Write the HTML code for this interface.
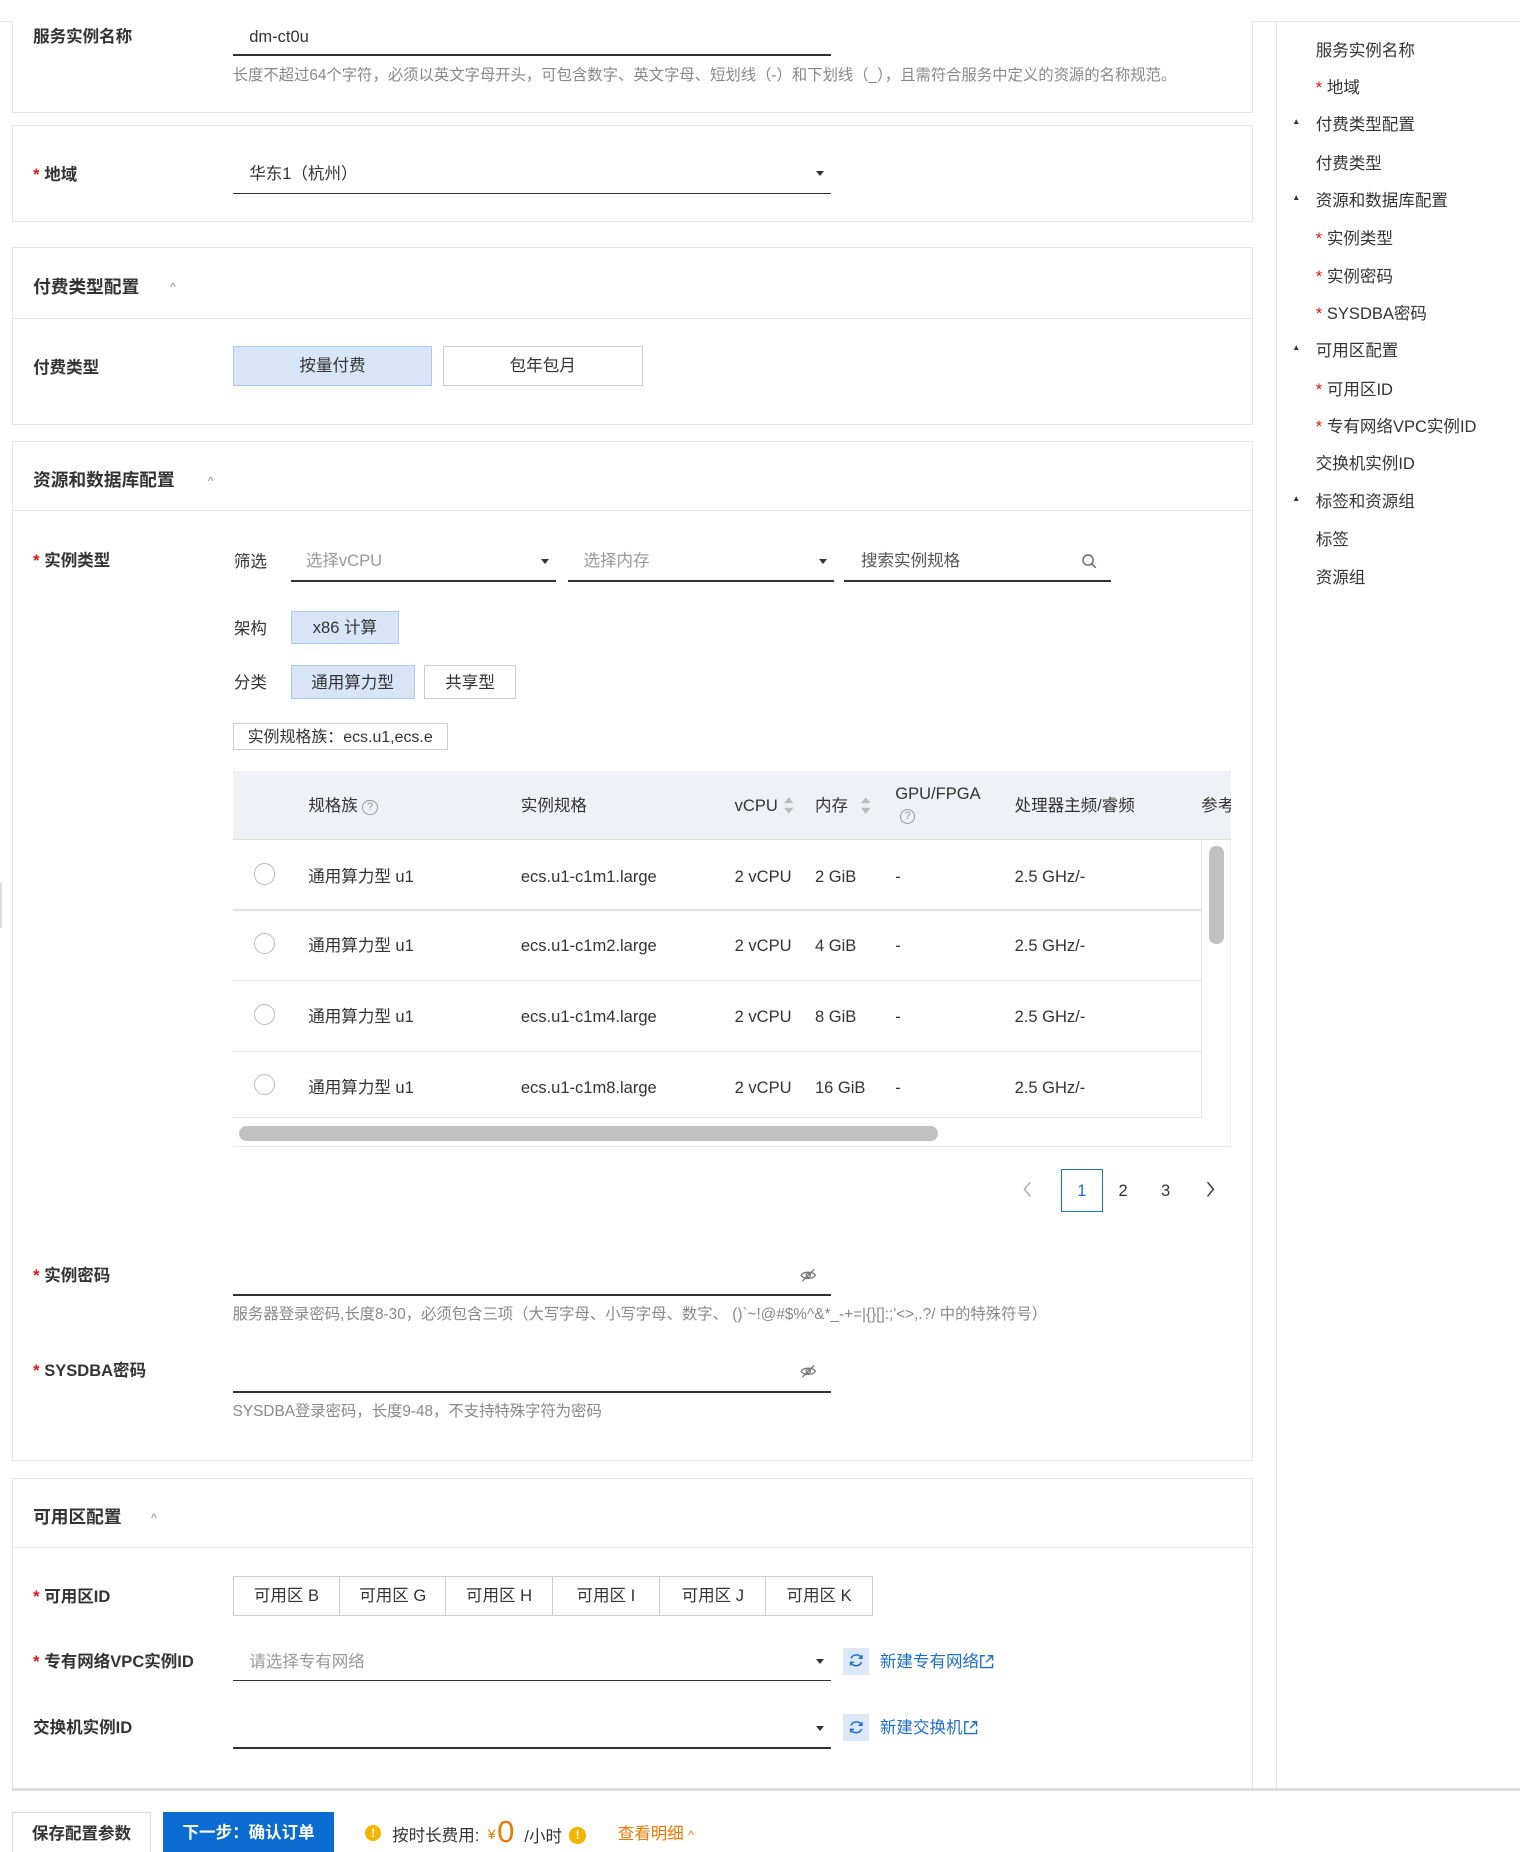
<!DOCTYPE html>
<html><head><meta charset="utf-8"><style>
*{box-sizing:border-box;margin:0;padding:0}
html,body{width:1520px;height:1852px;overflow:hidden;background:#fff}
#w{zoom:1.1811;position:relative;width:1287px;height:1568px;font-family:"Liberation Sans","Noto Sans CJK SC",sans-serif;color:#333;font-size:14px}
.a{position:absolute}
.t{position:absolute;line-height:20px;white-space:nowrap;padding-top:1px}
.card{position:absolute;left:10px;width:1051px;border:1px solid #e6e6e6;background:#fff}
.lb{font-weight:bold;color:#333;font-size:14px}
.st{color:#e3141a;margin-right:4px}
.ul{position:absolute;height:1.5px;background:#333}
.help{color:#888;font-size:13px}
.hd{font-weight:bold;font-size:15px}
.car{font-size:10px;color:#888}
.div{position:absolute;left:10px;width:1051px;height:1px;background:#e6e6e6}
.btn{position:absolute;border:1px solid #ccc;background:#fff;text-align:center;color:#333}
.sel{background:#d8e5f7;border-color:#a9c9ef}
.ph{color:#999}
.arr{position:absolute;width:0;height:0;border-left:4px solid transparent;border-right:4px solid transparent;border-top:5px solid #333}
.nav{position:absolute;left:1114px;font-size:14px;color:#333;line-height:20px;padding-top:1px}
.dot{position:absolute;left:1094px;font-size:7px;color:#333}
.row{position:absolute;left:197px;width:820px;height:1px;background:#e3e3e3}
.radio{position:absolute;left:215px;width:18px;height:18px;border:1px solid #bbb;border-radius:50%}
</style></head><body><div id="w">
<div class="a" style="left:0;top:18px;width:1287px;height:1px;background:#e6e6e6"></div>
<div class="a" style="left:1080px;top:18px;width:1px;height:1497px;background:#e6e6e6"></div>

<div class="card" style="top:18px;height:78px;border-top:none"></div>
<div class="t lb" style="left:28px;top:20px">服务实例名称</div>
<div class="t" style="left:211px;top:20px">dm-ct0u</div>
<div class="ul" style="left:197px;top:46px;width:507px"></div>
<div class="t help" style="left:197px;top:53px">长度不超过64个字符，必须以英文字母开头，可包含数字、英文字母、短划线（-）和下划线（_），且需符合服务中定义的资源的名称规范。</div>

<div class="card" style="top:106px;height:82px"></div>
<div class="t lb" style="left:28px;top:137px"><span class="st">*</span>地域</div>
<div class="t" style="left:211px;top:136px">华东1（杭州）</div>
<div class="arr" style="left:691px;top:145px"></div>
<div class="ul" style="left:197px;top:163px;width:507px"></div>

<div class="card" style="top:209px;height:151px"></div>
<div class="t hd" style="left:28px;top:233px">付费类型配置</div>
<div class="t car" style="left:144px;top:233px">^</div>
<div class="div" style="top:269px"></div>
<div class="t lb" style="left:28px;top:300px">付费类型</div>
<div class="btn sel" style="left:197px;top:293px;width:169px;height:34px;line-height:33px">按量付费</div>
<div class="btn" style="left:375px;top:293px;width:169px;height:34px;line-height:33px">包年包月</div>

<div class="card" style="top:373px;height:864px"></div>
<div class="t hd" style="left:28px;top:396px">资源和数据库配置</div>
<div class="t car" style="left:176px;top:397px">^</div>
<div class="div" style="top:432px"></div>
<div class="t lb" style="left:28px;top:464px"><span class="st">*</span>实例类型</div>
<div class="t" style="left:198px;top:465px">筛选</div>
<div class="t ph" style="left:259px;top:464px">选择vCPU</div>
<div class="arr" style="left:458px;top:473px"></div>
<div class="ul" style="left:246px;top:491px;width:225px"></div>
<div class="t ph" style="left:494px;top:464px">选择内存</div>
<div class="arr" style="left:693px;top:473px"></div>
<div class="ul" style="left:481px;top:491px;width:225px"></div>
<div class="t" style="left:729px;top:464px;color:#555">搜索实例规格</div>
<svg class="a" style="left:915px;top:468px" width="14" height="14" viewBox="0 0 14 14"><circle cx="6" cy="6" r="4.3" fill="none" stroke="#666" stroke-width="1.2"/><path d="M9.2 9.2L12.5 12.5" stroke="#666" stroke-width="1.3"/></svg>
<div class="ul" style="left:715px;top:491px;width:226px"></div>
<div class="t" style="left:198px;top:521px">架构</div>
<div class="btn sel" style="left:246px;top:517px;width:92px;height:28px;line-height:27px">x86 计算</div>
<div class="t" style="left:198px;top:567px">分类</div>
<div class="btn sel" style="left:246px;top:563px;width:105px;height:29px;line-height:28px">通用算力型</div>
<div class="btn" style="left:359px;top:563px;width:78px;height:29px;line-height:28px">共享型</div>
<div class="btn" style="left:197px;top:612px;width:182px;height:23px;line-height:23px;font-size:13.5px">实例规格族：ecs.u1,ecs.e</div>

<div class="a" style="left:197px;top:653px;width:845px;height:58px;background:#eef1f5;border-bottom:1px solid #ddd"></div>
<div class="a" style="left:197px;top:711px;width:845px;height:260px;border-right:1px solid #eee;border-bottom:1px solid #e6e6e6"></div>
<div class="t" style="left:261px;top:671px">规格族 <span style="display:inline-block;width:13px;height:13px;border:1px solid #999;border-radius:50%;font-size:9px;line-height:11px;text-align:center;color:#999;vertical-align:1px">?</span></div>
<div class="t" style="left:441px;top:671px">实例规格</div>
<div class="t" style="left:622px;top:671px">vCPU</div>
<svg class="a" style="left:664px;top:674px" width="8" height="16" viewBox="0 0 8 16"><path d="M0 6L4 1L8 6Z M0 10L4 15L8 10Z" fill="#bbb"/></svg>
<div class="t" style="left:690px;top:671px">内存</div>
<svg class="a" style="left:729px;top:674px" width="8" height="16" viewBox="0 0 8 16"><path d="M0 6L4 1L8 6Z M0 10L4 15L8 10Z" fill="#bbb"/></svg>
<div class="t" style="left:758px;top:661px">GPU/FPGA</div>
<div class="a" style="left:762px;top:685px;width:13px;height:13px;border:1px solid #999;border-radius:50%;font-size:9px;line-height:11px;text-align:center;color:#999">?</div>
<div class="t" style="left:859px;top:671px">处理器主频/睿频</div>
<div class="t" style="left:1017px;top:671px;width:25px;overflow:hidden">参考</div>

<div class="row" style="top:770px"></div><div class="row" style="top:830px"></div><div class="row" style="top:890px"></div><div class="row" style="top:946px"></div>
<div class="a" style="left:1017px;top:711px;width:1px;height:236px;background:#e3e3e3"></div>
<div class="a" style="left:1024px;top:716px;width:12px;height:83px;border-radius:6px;background:#c1c1c1"></div>
<div class="a" style="left:202px;top:953px;width:592px;height:13px;border-radius:7px;background:#c1c1c1"></div>

<div class="radio" style="top:731px"></div>
<div class="t" style="left:261px;top:731px">通用算力型 u1</div><div class="t" style="left:441px;top:731px">ecs.u1-c1m1.large</div><div class="t" style="left:622px;top:731px">2 vCPU</div><div class="t" style="left:690px;top:731px">2 GiB</div><div class="t" style="left:758px;top:731px">-</div><div class="t" style="left:859px;top:731px">2.5 GHz/-</div>
<div class="radio" style="top:790px"></div>
<div class="t" style="left:261px;top:790px">通用算力型 u1</div><div class="t" style="left:441px;top:790px">ecs.u1-c1m2.large</div><div class="t" style="left:622px;top:790px">2 vCPU</div><div class="t" style="left:690px;top:790px">4 GiB</div><div class="t" style="left:758px;top:790px">-</div><div class="t" style="left:859px;top:790px">2.5 GHz/-</div>
<div class="radio" style="top:850px"></div>
<div class="t" style="left:261px;top:850px">通用算力型 u1</div><div class="t" style="left:441px;top:850px">ecs.u1-c1m4.large</div><div class="t" style="left:622px;top:850px">2 vCPU</div><div class="t" style="left:690px;top:850px">8 GiB</div><div class="t" style="left:758px;top:850px">-</div><div class="t" style="left:859px;top:850px">2.5 GHz/-</div>
<div class="radio" style="top:909px"></div>
<div class="t" style="left:261px;top:910px">通用算力型 u1</div><div class="t" style="left:441px;top:910px">ecs.u1-c1m8.large</div><div class="t" style="left:622px;top:910px">2 vCPU</div><div class="t" style="left:690px;top:910px">16 GiB</div><div class="t" style="left:758px;top:910px">-</div><div class="t" style="left:859px;top:910px">2.5 GHz/-</div>

<svg class="a" style="left:865px;top:1000px" width="10" height="14" viewBox="0 0 10 14"><path d="M7 1L2 7L7 13" fill="none" stroke="#aaa" stroke-width="1.2"/></svg>
<div class="a" style="left:898px;top:990px;width:36px;height:36px;border:1px solid #1f6fd0;color:#1f6fd0;text-align:center;line-height:35px">1</div>
<div class="t" style="left:947px;top:997px">2</div>
<div class="t" style="left:983px;top:997px">3</div>
<svg class="a" style="left:1019px;top:1000px" width="10" height="14" viewBox="0 0 10 14"><path d="M3 1L8 7L3 13" fill="none" stroke="#333" stroke-width="1.2"/></svg>

<div class="t lb" style="left:28px;top:1069px"><span class="st">*</span>实例密码</div>
<svg class="a" style="left:677px;top:1073px" width="14" height="14" viewBox="0 0 14 14"><path d="M1 7C3 3.5 11 3.5 13 7C11 10.5 3 10.5 1 7Z" fill="none" stroke="#777" stroke-width="1.1"/><circle cx="7" cy="7" r="1.8" fill="none" stroke="#777" stroke-width="1.1"/><path d="M2 12L12 2" stroke="#777" stroke-width="1.1"/></svg>
<div class="ul" style="left:197px;top:1096px;width:507px"></div>
<div class="t help" style="left:197px;top:1102px">服务器登录密码,长度8-30，必须包含三项（大写字母、小写字母、数字、 ()`~!@#$%^&amp;*_-+=|{}[]:;'&lt;&gt;,.?/ 中的特殊符号）</div>
<div class="t lb" style="left:28px;top:1150px"><span class="st">*</span>SYSDBA密码</div>
<svg class="a" style="left:677px;top:1154px" width="14" height="14" viewBox="0 0 14 14"><path d="M1 7C3 3.5 11 3.5 13 7C11 10.5 3 10.5 1 7Z" fill="none" stroke="#777" stroke-width="1.1"/><circle cx="7" cy="7" r="1.8" fill="none" stroke="#777" stroke-width="1.1"/><path d="M2 12L12 2" stroke="#777" stroke-width="1.1"/></svg>
<div class="ul" style="left:197px;top:1178px;width:507px"></div>
<div class="t help" style="left:197px;top:1184px">SYSDBA登录密码，长度9-48，不支持特殊字符为密码</div>

<div class="card" style="top:1251px;height:264px"></div>
<div class="t hd" style="left:28px;top:1274px">可用区配置</div>
<div class="t car" style="left:128px;top:1275px">^</div>
<div class="div" style="top:1310px"></div>
<div class="t lb" style="left:28px;top:1341px"><span class="st">*</span>可用区ID</div>
<div class="btn" style="left:197px;top:1334px;width:91px;height:34px;line-height:33px">可用区 B</div>
<div class="btn" style="left:287px;top:1334px;width:91px;height:34px;line-height:33px">可用区 G</div>
<div class="btn" style="left:377px;top:1334px;width:91px;height:34px;line-height:33px">可用区 H</div>
<div class="btn" style="left:467px;top:1334px;width:92px;height:34px;line-height:33px">可用区 I</div>
<div class="btn" style="left:558px;top:1334px;width:91px;height:34px;line-height:33px">可用区 J</div>
<div class="btn" style="left:648px;top:1334px;width:91px;height:34px;line-height:33px">可用区 K</div>
<div class="t lb" style="left:28px;top:1396px"><span class="st">*</span>专有网络VPC实例ID</div>
<div class="t ph" style="left:211px;top:1396px">请选择专有网络</div>
<div class="arr" style="left:691px;top:1405px"></div>
<div class="ul" style="left:197px;top:1422px;width:507px"></div>
<div class="a" style="left:714px;top:1395px;width:22px;height:23px;background:#dde8f7"></div>
<svg class="a" style="left:718px;top:1399px" width="14" height="14" viewBox="0 0 14 14"><path d="M11.5 5A5 5 0 0 0 2.5 5.5M2.5 9A5 5 0 0 0 11.5 8.5" fill="none" stroke="#1f6fd0" stroke-width="1.3"/><path d="M11.8 2.5V5.3H9M2.2 11.5V8.7H5" fill="none" stroke="#1f6fd0" stroke-width="1.2"/></svg>
<div class="t" style="left:745px;top:1396px;color:#1f6fd0">新建专有网络</div>
<svg class="a" style="left:829px;top:1400px" width="13" height="13" viewBox="0 0 13 13"><path d="M5 1.5H1.5V11.5H11.5V8M7.5 1.5H11.5V5.5M11.5 1.5L6 7" fill="none" stroke="#1f6fd0" stroke-width="1.2"/></svg>
<div class="t lb" style="left:28px;top:1452px">交换机实例ID</div>
<div class="arr" style="left:691px;top:1461px"></div>
<div class="ul" style="left:197px;top:1479px;width:507px"></div>
<div class="a" style="left:714px;top:1451px;width:22px;height:23px;background:#dde8f7"></div>
<svg class="a" style="left:718px;top:1455px" width="14" height="14" viewBox="0 0 14 14"><path d="M11.5 5A5 5 0 0 0 2.5 5.5M2.5 9A5 5 0 0 0 11.5 8.5" fill="none" stroke="#1f6fd0" stroke-width="1.3"/><path d="M11.8 2.5V5.3H9M2.2 11.5V8.7H5" fill="none" stroke="#1f6fd0" stroke-width="1.2"/></svg>
<div class="t" style="left:745px;top:1452px;color:#1f6fd0">新建交换机</div>
<svg class="a" style="left:815px;top:1456px" width="13" height="13" viewBox="0 0 13 13"><path d="M5 1.5H1.5V11.5H11.5V8M7.5 1.5H11.5V5.5M11.5 1.5L6 7" fill="none" stroke="#1f6fd0" stroke-width="1.2"/></svg>

<div class="a" style="left:10px;top:1514px;width:1277px;height:2px;background:#ddd"></div>
<div class="btn" style="left:10px;top:1534px;width:118px;height:36px;line-height:35px;font-weight:bold;border-color:#ddd">保存配置参数</div>
<div class="a" style="left:138px;top:1534px;width:145px;height:36px;line-height:36px;background:#0a6bd0;color:#fff;text-align:center;font-weight:bold">下一步：确认订单</div>
<div class="a" style="left:309px;top:1545px;width:14px;height:14px;border-radius:50%;background:#f5b400;color:#fff;font-size:10px;line-height:14px;text-align:center;font-weight:bold">!</div>
<div class="t" style="left:332px;top:1543px">按时长费用:</div>
<div class="t" style="left:413px;top:1543px;color:#f07800;font-size:12px">¥</div>
<div class="t" style="left:421px;top:1536px;color:#f07800;font-size:26px;line-height:28px">0</div>
<div class="t" style="left:444px;top:1544px">/小时</div>
<div class="a" style="left:482px;top:1547px;width:14px;height:14px;border-radius:50%;background:#f5b400;color:#fff;font-size:10px;line-height:14px;text-align:center;font-weight:bold">!</div>
<div class="t" style="left:523px;top:1542px;color:#f07800">查看明细 <span style="font-size:10px">^</span></div>

<div class="nav" style="top:32px">服务实例名称</div>
<div class="nav" style="top:63px"><span class="st">*</span>地域</div>
<div class="dot" style="top:99px">▲</div><div class="nav" style="top:95px">付费类型配置</div>
<div class="nav" style="top:128px">付费类型</div>
<div class="dot" style="top:163px">▲</div><div class="nav" style="top:159px">资源和数据库配置</div>
<div class="nav" style="top:191px"><span class="st">*</span>实例类型</div>
<div class="nav" style="top:223px"><span class="st">*</span>实例密码</div>
<div class="nav" style="top:255px"><span class="st">*</span>SYSDBA密码</div>
<div class="dot" style="top:290px">▲</div><div class="nav" style="top:286px">可用区配置</div>
<div class="nav" style="top:319px"><span class="st">*</span>可用区ID</div>
<div class="nav" style="top:350px"><span class="st">*</span>专有网络VPC实例ID</div>
<div class="nav" style="top:382px">交换机实例ID</div>
<div class="dot" style="top:418px">▲</div><div class="nav" style="top:414px">标签和资源组</div>
<div class="nav" style="top:446px">标签</div>
<div class="nav" style="top:478px">资源组</div>
<div class="a" style="left:0;top:748px;width:2px;height:38px;background:#ddd"></div>
</div></body></html>
